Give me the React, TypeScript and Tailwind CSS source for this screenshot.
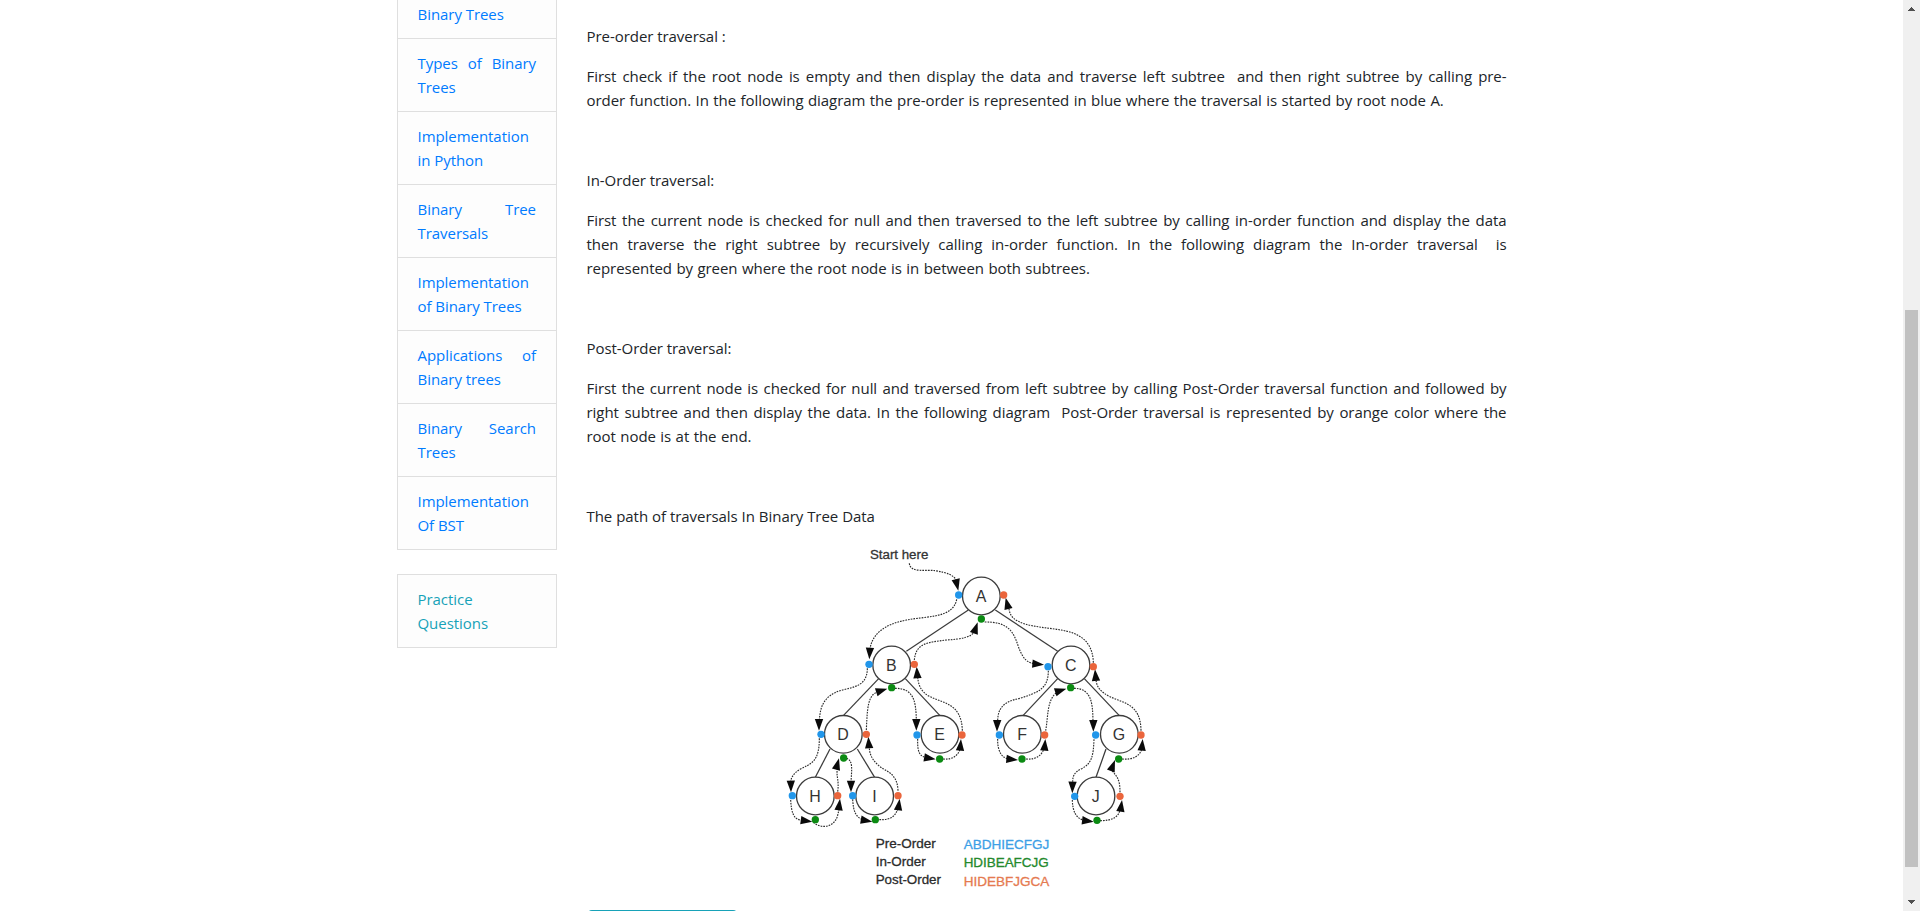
const links: string[][] = [
  ["Binary Trees"],
  ["Types of Binary", "Trees"],
  ["Implementation", "in Python"],
  ["Binary Tree", "Traversals"],
  ["Implementation", "of Binary Trees"],
  ["Applications of", "Binary trees"],
  ["Binary Search", "Trees"],
  ["Implementation", "Of BST"],
];

const justified = new Set(["Types of Binary", "Binary Tree", "Applications of", "Binary Search"]);

const sections = [
  {
    title: "Pre-order traversal :",
    lines: [
      "First check if the root node is empty and then display the data and traverse left subtree \u00a0and then right subtree by calling pre-",
      "order function. In the following diagram the pre-order is represented in blue where the traversal is started by root node A.",
    ],
  },
  {
    title: "In-Order traversal:",
    lines: [
      "First the current node is checked for null and then traversed to the left subtree by calling in-order function and display the data",
      "then traverse the right subtree by recursively calling in-order function. In the following diagram the In-order traversal \u00a0is",
      "represented by green where the root node is in between both subtrees.",
    ],
  },
  {
    title: "Post-Order traversal:",
    lines: [
      "First the current node is checked for null and traversed from left subtree by calling Post-Order traversal function and followed by",
      "right subtree and then display the data. In the following diagram \u00a0Post-Order traversal is represented by orange color where the",
      "root node is at the end.",
    ],
  },
];

type Point = [number, number];

const nodes: [string, number, number][] = [
  ["A", 604, 168], ["B", 335, 375], ["C", 873, 375], ["D", 190, 583], ["E", 480, 583],
  ["F", 727, 583], ["G", 1018, 583], ["H", 106, 768], ["I", 284, 768], ["J", 948, 768],
];

const edges = [
  "M565 210L379 334", "M646 210L833 334", "M296 416L190 527", "M376 416L480 527",
  "M833 416L729 527", "M913 416L1018 527", "M150 627L106 712", "M232 627L284 712", "M978 627L948 712",
];

const blue: Point[] = [[536, 165], [267, 373], [804, 380], [123, 583], [411, 585], [658, 585], [947, 585], [37, 767], [218, 767], [884, 769]];
const orange: Point[] = [[671, 165], [403, 373], [940, 380], [259, 583], [546, 585], [794, 585], [1083, 585], [173, 767], [354, 767], [1020, 769]];
const green: Point[] = [[604, 237], [335, 443], [872, 443], [191, 654], [479, 657], [726, 657], [1016, 657], [106, 839], [286, 839], [951, 841]];

// Each walk: dotted path, arrow tip x, tip y, arrow direction in degrees (0 = right, 90 = down)
const walks: [string, number, number, number][] = [
  ["M388 70C390 100 440 88 465 92C505 98 525 108 530 124", 535, 152, 77],
  ["M530 178C520 235 440 228 380 240C310 253 275 285 270 328", 268, 358, 93],
  ["M262 385C262 450 200 440 165 458C125 478 120 510 118 543", 117, 572, 90],
  ["M118 595C118 665 95 670 60 688C40 700 32 715 32 727", 33, 757, 89],
  ["M32 780C34 815 40 840 65 840", 97, 845, 8],
  ["M100 847C125 868 160 862 172 830L178 805", 180, 776, -83],
  ["M173 755C178 720 168 710 172 687", 177, 655, -75],
  ["M199 655C220 660 215 690 213 725", 213, 757, 90],
  ["M218 778C220 815 228 832 247 838", 277, 845, 10],
  ["M298 839C340 840 345 825 355 805", 359, 776, -82],
  ["M354 752C352 700 320 695 300 680C275 660 268 640 268 622", 265, 590, -94],
  ["M259 570C262 510 262 462 295 456", 322, 446, -18],
  ["M345 445C400 445 408 480 409 543", 409, 572, 90],
  ["M413 597C412 640 420 648 437 652", 467, 658, 10],
  ["M489 657C520 660 535 645 541 625", 543, 597, -85],
  ["M547 572C545 490 490 490 450 470C420 455 415 430 413 412", 410, 380, -94],
  ["M403 360C408 310 440 307 500 300C550 297 575 290 583 275", 593, 247, -71],
  ["M614 246C680 245 700 270 715 320C730 360 745 370 763 370", 792, 374, 5],
  ["M805 392C805 450 770 458 720 475C665 485 653 510 653 545", 651, 575, 91],
  ["M653 597C652 640 670 655 687 657", 714, 660, 6],
  ["M738 657C770 660 785 645 793 625", 796, 597, -85],
  ["M797 572C805 530 800 480 830 458", 859, 446, -18],
  ["M882 445C935 445 938 490 939 545", 940, 575, 90],
  ["M942 598C940 650 935 670 905 686C880 698 878 710 878 728", 877, 760, 91],
  ["M877 780C878 815 888 835 912 841", 941, 845, 7],
  ["M960 842C1000 842 1015 830 1020 810", 1026, 780, -82],
  ["M1020 757C1020 715 1010 710 995 690", 1005, 660, -69],
  ["M1026 657C1060 660 1080 648 1086 625", 1088, 597, -85],
  ["M1083 572C1082 490 1030 490 990 470C960 455 950 440 948 420", 945, 388, -95],
  ["M940 368C938 290 880 275 830 268C760 258 690 255 687 205", 677, 173, -104],
];

const captions: [string, number, number, number, string][] = [
  ["Start here", 270, 57, 175, "#333333"],
  ["Pre-Order", 287, 923, 180, "#2b2b2b"],
  ["In-Order", 287, 978, 150, "#2b2b2b"],
  ["Post-Order", 287, 1033, 196, "#2b2b2b"],
  ["ABDHIECFGJ", 551, 927, 257, "#3d9fe6"],
  ["HDIBEAFCJG", 551, 982, 255, "#23892c"],
  ["HIDEBFJGCA", 551, 1038, 257, "#e57a50"],
];

function Dots({ points, color }: { points: Point[]; color: string }) {
  return (
    <g fill={color}>
      {points.map(([x, y]) => <circle key={`${x}-${y}`} cx={x} cy={y} r="11" />)}
    </g>
  );
}

function TreeDiagram() {
  return (
    <svg viewBox="-579 12 2760 1098" className="block h-[366px] w-[920px] font-['Liberation_Sans',sans-serif]">
      <g fill="none" stroke="#3c3c3c" strokeWidth="3.8">
        {edges.map((d) => <path key={d} d={d} />)}
      </g>
      <g fill="none" stroke="#2c2c2c" strokeWidth="3.4" strokeDasharray="5 3.2">
        {walks.map(([d]) => <path key={d} d={d} />)}
      </g>
      {nodes.map(([name, x, y]) => (
        <g key={name}>
          <circle cx={x} cy={y} r="56.5" fill="#ffffff" stroke="#3c3c3c" strokeWidth="4" />
          <text transform={`translate(${x - 1} ${y + 18}) scale(0.92 1)`} textAnchor="middle" fontSize="52" fill="#333333">{name}</text>
        </g>
      ))}
      <g fill="#0a0a0a">
        {walks.map(([d, x, y, angle]) => (
          <path key={d} d="M0 0L-35 -12.5V12.5Z" transform={`translate(${x} ${y}) rotate(${angle})`} />
        ))}
      </g>
      <Dots points={blue} color="#2196ea" />
      <Dots points={orange} color="#ea653c" />
      <Dots points={green} color="#0b8a12" />
      {captions.map(([label, x, y, width, color]) => (
        <text key={label} x={x} y={y} textLength={width} lengthAdjust="spacingAndGlyphs" fontSize="41" fill={color} stroke={color} strokeWidth="0.9">
          {label}
        </text>
      ))}
    </svg>
  );
}

function Sidebar() {
  return (
    <aside className="w-40 shrink-0">
      <nav className="border-x border-[#dfdfdf] bg-[#fdfdfd] text-[#007bff]">
        {links.map((lines, i) => (
          <a key={lines.join(" ")} className={`block border-b border-[#dfdfdf] pl-[19.5px] pr-5 pb-3 ${i === 0 ? "pt-[2px]" : "pt-3"}`}>
            {lines.map((line) => (
              <span key={line} className={`block whitespace-nowrap ${justified.has(line) ? "[text-align-last:justify]" : ""}`}>{line}</span>
            ))}
          </a>
        ))}
      </nav>
      <a className="mt-6 block border border-[#dfdfdf] bg-[#fdfdfd] py-3 pl-[19.5px] pr-5 text-[#17a2b8]">
        <span className="block">Practice</span>
        <span className="block">Questions</span>
      </a>
    </aside>
  );
}

function Scrollbar() {
  return (
    <div className="flex h-full w-[17px] shrink-0 flex-col items-center bg-[#f0f0f0]">
      <svg viewBox="0 0 7 4" shapeRendering="crispEdges" className="mt-[7px] h-1 w-[7px] shrink-0 fill-[#505050]"><path d="M3 0h1v1h1v1h1v1h1v1H0V3h1V2h1V1h1z" /></svg>
      <div className="mt-[299px] h-[557px] w-[13px] shrink-0 bg-[#c1c1c1]" />
      <svg viewBox="0 0 7 4" shapeRendering="crispEdges" className="mt-[33px] h-1 w-[7px] shrink-0 fill-[#505050]"><path d="M0 0h7v1H6v1H5v1H4v1H3V3H2V2H1V1H0z" /></svg>
    </div>
  );
}

export default function App() {
  return (
    <div className="flex h-[911px] w-full overflow-hidden bg-white font-['Open_Sans','Noto_Sans',sans-serif] text-[15px] leading-6 tracking-[-0.05px] text-[#212529]">
      <div className="flex min-w-0 flex-1 items-start pl-[397px]">
        <Sidebar />
        <main className="ml-[29.5px] w-[920px] shrink-0 pt-6">
          {sections.map(({ title, lines }) => (
            <section key={title} className="mb-14">
              <p className="mb-4">{title}</p>
              <div className="[word-spacing:0.6px]">
                {lines.map((line, i) => (
                  <p key={line} className={`whitespace-nowrap ${i < lines.length - 1 ? "[text-align-last:justify]" : ""}`}>{line}</p>
                ))}
              </div>
            </section>
          ))}
          <p className="mb-4 [word-spacing:0.1px]">The path of traversals In Binary Tree Data</p>
          <TreeDiagram />
          <button className="ml-[1px] block h-[38px] w-[149px] rounded bg-[#17a2b8]" />
        </main>
      </div>
      <Scrollbar />
    </div>
  );
}
